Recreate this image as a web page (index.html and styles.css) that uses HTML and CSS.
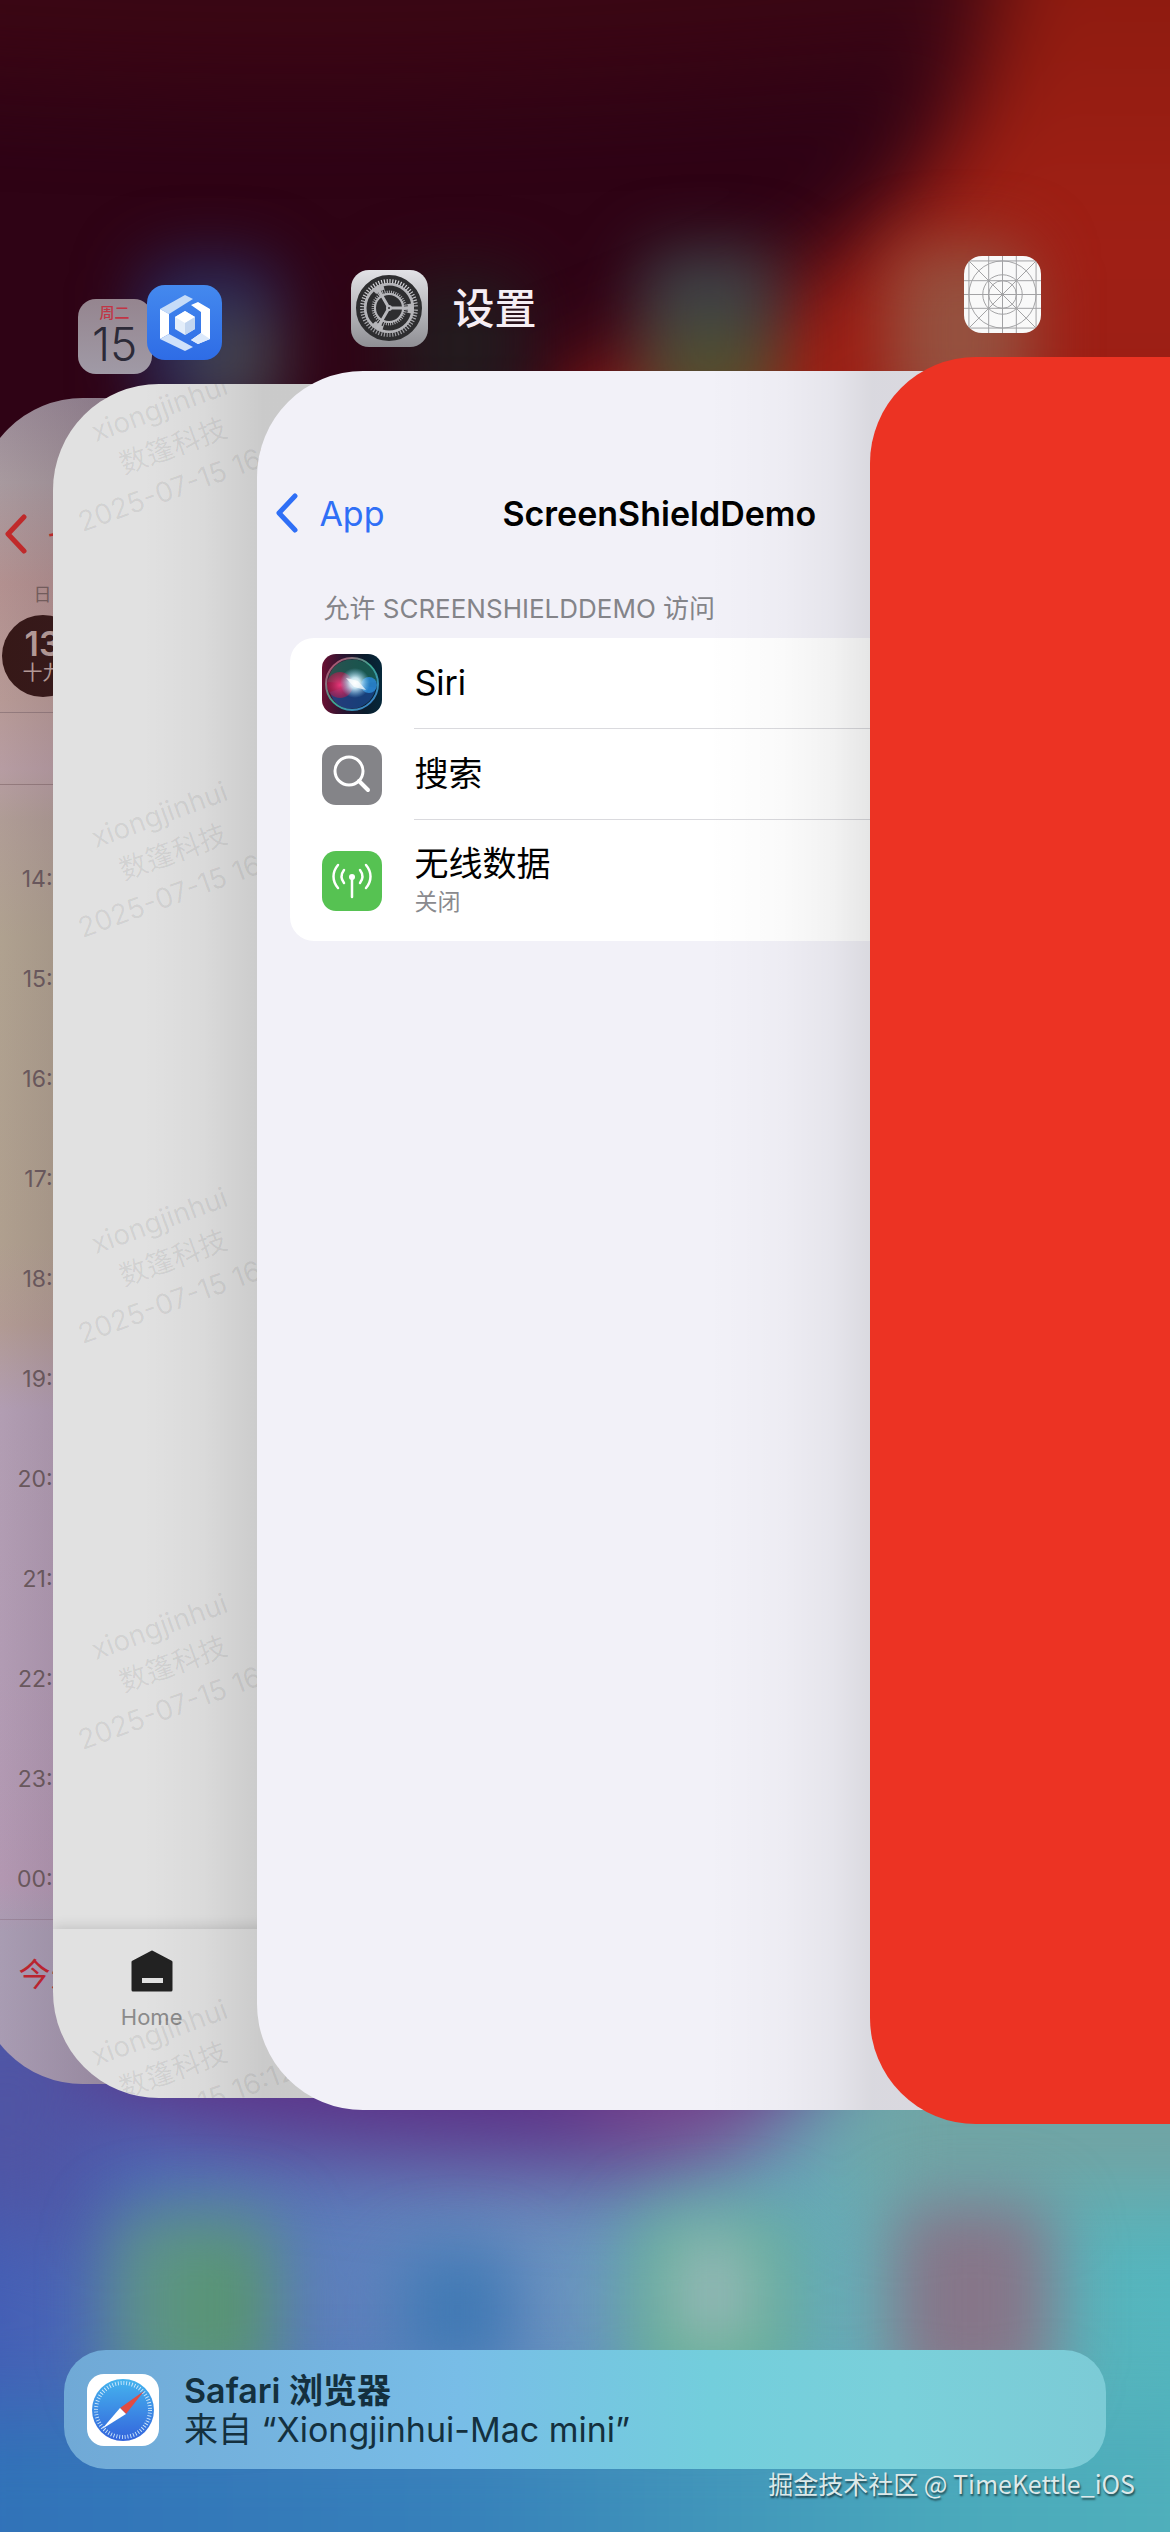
FILE: index.html
```
<!DOCTYPE html>
<html lang="zh-CN">

<head>
    <meta charset="UTF-8" />
    <meta name="viewport" content="width=device-width, initial-scale=1" />
    <title>App Switcher</title>
    <link rel="stylesheet" href="styles.css">
</head>

<body>
    <!-- blurred home screen -->
    <svg class="wallpaper" viewBox="0 0 1170 2532" preserveAspectRatio="none" aria-hidden="true">
        <defs>
            <linearGradient id="wp-red" x1="0" y1="0" x2="0" y2="1">
                <stop offset="0" stop-color="#84180d" />
                <stop offset="0.5" stop-color="#a02015" />
                <stop offset="1" stop-color="#981c14" />
            </linearGradient>
            <linearGradient id="wp-mid" x1="0" y1="0" x2="1" y2="0">
                <stop offset="0" stop-color="#4560b6" />
                <stop offset="0.45" stop-color="#6a90c0" />
                <stop offset="0.75" stop-color="#66b0b8" />
                <stop offset="1" stop-color="#54b6be" />
            </linearGradient>
            <linearGradient id="wp-low" x1="0" y1="0" x2="1" y2="0">
                <stop offset="0" stop-color="#3070b8" />
                <stop offset="0.4" stop-color="#3680ba" />
                <stop offset="0.75" stop-color="#4aa9bb" />
                <stop offset="1" stop-color="#52b2bb" />
            </linearGradient>
        </defs>
        <rect width="1170" height="1300" fill="#2f0315" />
        <rect y="1300" width="1170" height="1232" fill="url(#wp-mid)" />
        <g class="blur-lg">
            <path d="M-100-100H1300V40C900 60 500 120-100 80Z" fill="#3a0614" />
            <path d="M1010-150L990 20C970 110 920 190 850 250C780 310 680 335 540 400V600H1350V-150Z" fill="url(#wp-red)" />
            <path d="M-100 2000H100V2260C60 2240-20 2200-100 2220Z" fill="#5055a4" />
            <path d="M90 2000H850C800 2150 700 2190 540 2170C380 2160 200 2150 90 2090Z" fill="#5c3388" />
            <path d="M560 2070H820C790 2140 720 2170 620 2140Z" fill="#7c468c" />
            <path d="M850 2060H1300V2200H850Z" fill="#72a3a3" />
            <path d="M-100 2410H1300V2650H-100Z" fill="url(#wp-low)" />
        </g>
        <g class="blur-md">
            <rect x="140" y="260" width="140" height="160" rx="30" fill="#28285a" />
            <rect x="190" y="310" width="90" height="100" rx="30" fill="#46464f" />
            <rect x="390" y="270" width="140" height="150" rx="30" fill="#231a1e" />
            <rect x="640" y="250" width="140" height="170" rx="30" fill="#3c4248" />
            <rect x="650" y="330" width="130" height="90" rx="30" fill="#54502e" />
            <rect x="890" y="245" width="140" height="175" rx="30" fill="#95513f" />
            <rect x="110" y="2210" width="170" height="190" rx="40" fill="#5d9487" />
            <rect x="190" y="2240" width="70" height="140" rx="30" fill="#589470" />
            <rect x="400" y="2250" width="115" height="120" rx="30" fill="#4079b4" />
            <rect x="630" y="2210" width="165" height="190" rx="40" fill="#66b094" />
            <rect x="675" y="2235" width="75" height="110" rx="30" fill="#9ab8bc" />
            <rect x="890" y="2200" width="165" height="200" rx="40" fill="#867689" />
        </g>
    </svg>

    <main class="switcher">
        <!-- Calendar -->
        <section class="window window-calendar">
            <header class="window-header">
                <div class="icon icon-calendar">
                    <span class="icon-weekday">周二</span>
                    <span class="icon-day">15</span>
                </div>
            </header>
            <div class="card calendar">
                <div class="calendar-nav">
                    <svg class="chevron" viewBox="0 0 24 40"><path d="M20 3L4 20l16 17" /></svg>
                    <a href="#">七月</a>
                </div>
                <div class="calendar-day">
                    <span class="day-name">日</span>
                    <div class="day-circle">
                        <span class="day-num">13</span>
                        <span class="day-lunar">十九</span>
                    </div>
                </div>
                <div class="calendar-band"></div>
                <ol class="hours">
                    <li>14:00</li>
                    <li>15:00</li>
                    <li>16:00</li>
                    <li>17:00</li>
                    <li>18:00</li>
                    <li>19:00</li>
                    <li>20:00</li>
                    <li>21:00</li>
                    <li>22:00</li>
                    <li>23:00</li>
                    <li>00:00</li>
                </ol>
                <div class="calendar-toolbar"><a href="#">今天</a></div>
            </div>
        </section>

        <!-- Company app -->
        <section class="window window-company">
            <header class="window-header">
                <svg class="icon icon-company" viewBox="0 0 75 75">
                    <defs>
                        <linearGradient id="hex-bg" x1="0" y1="0" x2="0" y2="1">
                            <stop offset="0" stop-color="#4489ee" />
                            <stop offset="1" stop-color="#2e6ce6" />
                        </linearGradient>
                    </defs>
                    <rect width="75" height="75" fill="url(#hex-bg)" />
                    <path d="M38 10l8 4-24 15-9-5z" fill="#c6dcf8" />
                    <path d="M13 24l9 5v20l-9 5z" fill="#fff" />
                    <path d="M13 54l9-5 24 13-8 4z" fill="#cfe1fa" />
                    <path d="M44 20l7-3 12 7v30l-12 5-7-4 10-7V27z" fill="#fff" />
                    <path d="M54 48l9 6-12 5-7-4z" fill="#dce9fb" />
                    <path d="M38 26l10 6v12l-10 6-10-6V32z" fill="#e4eefa" />
                    <path d="M38 26l10 6-10 6-10-6z" fill="#fff" />
                    <path d="M38 38l10-6v12l-10 6z" fill="#c3d6f0" />
                </svg>
            </header>
            <div class="card company">
                <div class="watermarks" aria-hidden="true">
                    <p class="watermark">xiongjinhui<br>数篷科技<br>2025-07-15 16:12</p>
                    <p class="watermark">xiongjinhui<br>数篷科技<br>2025-07-15 16:12</p>
                    <p class="watermark">xiongjinhui<br>数篷科技<br>2025-07-15 16:12</p>
                    <p class="watermark">xiongjinhui<br>数篷科技<br>2025-07-15 16:12</p>
                    <p class="watermark">xiongjinhui<br>数篷科技<br>2025-07-15 16:12</p>
                </div>
                <nav class="tabbar">
                    <button type="button" class="tab">
                        <svg viewBox="0 0 42 42">
                            <path d="M2 12L21 2l19 10v28H2z" fill="#222" stroke="#222" stroke-width="3" stroke-linejoin="round" />
                            <rect x="11" y="28" width="21" height="5" fill="#e2e2e2" />
                        </svg>
                        Home
                    </button>
                </nav>
            </div>
        </section>

        <!-- Settings -->
        <section class="window window-settings">
            <header class="window-header">
                <svg class="icon" viewBox="0 0 77 77">
                    <defs>
                        <linearGradient id="gear-bg" x1="0" y1="0" x2="0" y2="1">
                            <stop offset="0" stop-color="#e2e2e6" />
                            <stop offset="1" stop-color="#8f8f94" />
                        </linearGradient>
                    </defs>
                    <rect width="77" height="77" fill="url(#gear-bg)" />
                    <circle cx="38" cy="38" r="31" fill="none" stroke="#2e2e30" stroke-width="4" />
                    <circle cx="38" cy="38" r="28" fill="none" stroke="#2e2e30" stroke-width="6" stroke-dasharray="1.7 1.2" />
                    <circle cx="38" cy="38" r="25" fill="#b4b4b8" />
                    <circle cx="38" cy="38" r="20" fill="none" stroke="#2e2e30" stroke-width="5" stroke-dasharray="32 9.9" stroke-dashoffset="-5" />
                    <circle cx="38" cy="38" r="17" fill="none" stroke="#2e2e30" stroke-width="4" stroke-dasharray="1.3 1" />
                    <circle cx="38" cy="38" r="14" fill="#2e2e30" stroke="#b4b4b8" stroke-width="2" />
                    <g stroke="#b8b8bc" stroke-width="3">
                        <path d="M38 38H62M38 38L26 17.200M38 38L26 58.800" />
                    </g>
                    <circle cx="38" cy="38" r="3" fill="#b8b8bc" />
                    <circle cx="38" cy="38" r="1" fill="#2e2e30" />
                </svg>
                <span class="window-name">设置</span>
            </header>
            <div class="card settings">
                <div class="settings-nav">
                    <a href="#" class="back">
                        <svg class="chevron" viewBox="0 0 24 40"><path d="M20 3L4 20l16 17" /></svg>
                        App
                    </a>
                    <h1>ScreenShieldDemo</h1>
                </div>
                <h2 class="group-title">允许 SCREENSHIELDDEMO 访问</h2>
                <ul class="group">
                    <li class="row">
                        <svg class="row-icon" viewBox="0 0 60 60">
                            <defs>
                                <linearGradient id="siri-bg" x1="0" y1="0" x2="1" y2="0">
                                    <stop offset="0" stop-color="#6a1032" />
                                    <stop offset="0.35" stop-color="#2a1430" />
                                    <stop offset="0.7" stop-color="#0b1c2c" />
                                    <stop offset="1" stop-color="#06283a" />
                                </linearGradient>
                                <radialGradient id="siri-glow">
                                    <stop offset="0" stop-color="#fff" />
                                    <stop offset="0.35" stop-color="#d8f4ff" stop-opacity="0.9" />
                                    <stop offset="1" stop-color="#7ac8f0" stop-opacity="0" />
                                </radialGradient>
                                <linearGradient id="siri-ring" x1="0" y1="0" x2="1" y2="1">
                                    <stop offset="0" stop-color="#d03a68" />
                                    <stop offset="0.5" stop-color="#3aa890" />
                                    <stop offset="1" stop-color="#3a78d8" />
                                </linearGradient>
                                <radialGradient id="siri-pink">
                                    <stop offset="0" stop-color="#e8387a" />
                                    <stop offset="1" stop-color="#b01c4c" stop-opacity="0.6" />
                                </radialGradient>
                            </defs>
                            <rect width="60" height="60" fill="url(#siri-bg)" />
                            <path d="M6 28C8-2 52-2 55 28L33 30Z" fill="#1f6e5c" opacity="0.7" />
                            <path d="M8 38C14 62 48 60 54 34L33 30Z" fill="#1c4f9a" opacity="0.7" />
                            <circle cx="18" cy="31" r="13" fill="url(#siri-pink)" />
                            <circle cx="47" cy="31" r="8" fill="#2a86d0" opacity="0.9" />
                            <circle cx="30" cy="30" r="26" fill="none" stroke="url(#siri-ring)" stroke-width="2" />
                            <circle cx="33" cy="29" r="15" fill="url(#siri-glow)" />
                            <path d="M24 24L36 27l8 9-12-3z" fill="#fff" opacity="0.7" />
                        </svg>
                        <div class="row-body"><a href="#">Siri</a></div>
                    </li>
                    <li class="row">
                        <svg class="row-icon" viewBox="0 0 60 60">
                            <rect width="60" height="60" fill="#848488" />
                            <g fill="none" stroke="#fff" stroke-width="3" stroke-linecap="round">
                                <circle cx="27" cy="26" r="14" />
                                <path d="M37 36l9 9" stroke-width="4" />
                            </g>
                        </svg>
                        <div class="row-body"><a href="#">搜索</a></div>
                    </li>
                    <li class="row row-tall">
                        <svg class="row-icon" viewBox="0 0 60 60">
                            <rect width="60" height="60" fill="#56c252" />
                            <circle cx="30" cy="26" r="3" fill="#fff" />
                            <g fill="none" stroke="#fff" stroke-width="2.500" stroke-linecap="round">
                                <path d="M30 28v18" />
                                <path d="M22 32c-3-4-3-9 0-13M38 32c3-4 3-9 0-13" />
                                <path d="M16 37c-6-7-6-16 0-23M44 37c6-7 6-16 0-23" />
                            </g>
                        </svg>
                        <div class="row-body">
                            <a href="#">无线数据</a>
                            <small>关闭</small>
                        </div>
                    </li>
                </ul>
            </div>
        </section>

        <!-- ScreenShieldDemo -->
        <section class="window window-demo">
            <header class="window-header">
                <svg class="icon" viewBox="0 0 78 78">
                    <rect width="78" height="78" fill="#f9f9f9" />
                    <g fill="none" stroke="#a2a2a4" stroke-width="1">
                        <path d="M5 0V78M25 0V78M39 0V78M53 0V78M73 0V78" />
                        <path d="M0 5H78M0 25H78M0 39H78M0 53H78M0 73H78" />
                        <path d="M5 5L73 73M73 5L5 73" />
                        <circle cx="39" cy="39" r="34" />
                        <circle cx="39" cy="39" r="20" />
                        <circle cx="39" cy="39" r="14" />
                    </g>
                </svg>
            </header>
            <div class="card demo"></div>
        </section>
    </main>

    <footer class="dock">
        <button type="button" class="handoff">
            <svg class="handoff-icon" viewBox="0 0 72 72">
                <defs>
                    <linearGradient id="safari-bg" x1="0" y1="0" x2="0" y2="1">
                        <stop offset="0" stop-color="#45b4ee" />
                        <stop offset="1" stop-color="#3464dc" />
                    </linearGradient>
                </defs>
                <rect width="72" height="72" fill="#fff" />
                <circle cx="36" cy="36" r="31" fill="url(#safari-bg)" />
                <circle cx="36" cy="36" r="27" fill="none" stroke="#cfe8fb" stroke-width="4" stroke-dasharray="0.900 1.927" />
                <path d="M57 17L39 40l-6-6z" fill="#e24b41" />
                <path d="M15 55L33 34l6 6z" fill="#fff" />
            </svg>
            <span class="handoff-text">
                <strong>Safari 浏览器</strong>
                <span>来自 “Xiongjinhui-Mac mini”</span>
            </span>
        </button>
        <p class="credit">掘金技术社区 @ TimeKettle_iOS</p>
    </footer>
</body>

</html>
```
FILE: styles.css
```
* {
    box-sizing: border-box;
}

body {
    position: relative;
    margin: 0;
    min-height: 100vh;
    display: flex;
    flex-direction: column;
    overflow: hidden;
    background: #2f0315;
    font-family: Inter, "Noto Sans CJK SC", sans-serif;
    color: #000;
}

a {
    color: inherit;
    text-decoration: none;
}

h1, h2, p, ul, ol {
    margin: 0;
    padding: 0;
    font-weight: 400;
    list-style: none;
}

button {
    border: none;
    background: none;
    padding: 0;
    font: inherit;
    text-align: left;
    cursor: pointer;
}

.wallpaper {
    position: absolute;
    top: 0;
    left: 0;
    width: 100%;
    height: 100%;
}

.blur-lg {
    filter: blur(44px);
}

.blur-md {
    filter: blur(32px);
}

/* stacked windows */
.switcher {
    position: relative;
    flex: 1;
    overflow: hidden;
}

.window {
    position: absolute;
}

.window-calendar {
    top: 299px;
    left: -2%;
    width: 66.6%;
}

.window-company {
    top: 285px;
    left: 4.5%;
    width: 67.7%;
}

.window-settings {
    top: 270px;
    left: 22%;
    width: 68.7%;
}

.window-demo {
    top: 256px;
    left: 74.4%;
    width: 69.8%;
}

.window-header {
    display: flex;
    align-items: center;
    gap: 24px;
    margin-bottom: 24px;
    padding-left: 94px;
}

.icon {
    display: block;
    flex: none;
    width: 77px;
    height: 77px;
    border-radius: 18px;
}

.window-name {
    color: #f6eef4;
    font-size: 42px;
    font-weight: 500;
    line-height: 60px;
}

.card {
    position: relative;
    overflow: hidden;
    display: flex;
    flex-direction: column;
    aspect-ratio: 1170 / 2532;
    border-radius: 106px;
}

.chevron {
    flex: none;
    width: 24px;
    height: 40px;
    fill: none;
    stroke: currentColor;
    stroke-width: 5px;
    stroke-linecap: round;
    stroke-linejoin: round;
}

/* calendar */
.window-calendar .window-header {
    padding-left: 101px;
}

.icon-calendar {
    display: flex;
    flex-direction: column;
    align-items: center;
    width: 74px;
    height: 75px;
    padding-top: 4px;
    background: linear-gradient(#95858f, #a09aa6);
}

.icon-weekday {
    color: #c13545;
    font-size: 15px;
    font-weight: 500;
    line-height: 20px;
}

.icon-day {
    color: #2c2a38;
    font-size: 46px;
    font-weight: 300;
    line-height: 42px;
}

.calendar {
    background: linear-gradient(#9b8b98, #a89a9f 5%, #b39190 11%, #b79a96 18%, #b79da3 22%, #b09d96 25%, #b0a290 32%, #b0a08f 50%, #b29b94 55%, #b29eb3 60%, #b29cb4 75%, #b398b2 88%, #a99db3 91%, #a99cb3);
}

.calendar::after,
.company::after,
.settings::after {
    content: "";
    position: absolute;
    top: 0;
    bottom: 0;
    pointer-events: none;
}

.calendar::after {
    left: 20px;
    width: 160px;
    background: linear-gradient(90deg, transparent, rgba(60, 40, 60, 0.25));
}

.calendar-nav {
    display: flex;
    align-items: center;
    gap: 20px;
    height: 60px;
    margin-top: 106px;
    padding-left: 27px;
    color: #c42a2a;
    font-size: 34px;
}

.calendar-day {
    display: flex;
    flex-direction: column;
    align-items: flex-start;
    height: 149px;
    padding: 18px 25px 0;
    border-bottom: 1px solid #957c7e;
}

.day-name {
    width: 82px;
    text-align: center;
    color: #76605e;
    font-size: 18px;
    line-height: 26px;
}

.day-circle {
    display: flex;
    flex-direction: column;
    align-items: center;
    width: 82px;
    height: 82px;
    margin-top: 7px;
    padding-top: 12px;
    border-radius: 50%;
    background: #361817;
    color: #b99f9b;
}

.day-num {
    font-size: 34px;
    font-weight: 600;
    line-height: 34px;
}

.day-lunar {
    font-size: 20px;
    line-height: 24px;
}

.calendar-band {
    height: 72px;
    border-bottom: 1px solid #957c7e;
}

.hours {
    width: 105px;
    margin-top: 44px;
    text-align: right;
    color: #6b5a5e;
    font-size: 23px;
    line-height: 100px;
}

.calendar-toolbar {
    flex: 1;
    margin-top: -10px;
    padding: 33px 42px;
    border-top: 1px solid #9c879c;
    color: #c2242e;
    font-size: 32px;
    line-height: 44px;
}

/* company app */
.icon-company {
    width: 75px;
    height: 75px;
}

.company {
    background: #e1e1e1;
}

.company::after {
    left: 90px;
    width: 240px;
    background: linear-gradient(90deg, transparent, rgba(0, 0, 0, 0.03) 25%, rgba(0, 0, 0, 0.1) 50%, rgba(0, 0, 0, 0.1));
}

.watermarks {
    position: absolute;
    top: 2px;
    left: 0;
    display: flex;
    flex-direction: column;
    gap: 286px;
}

.watermark {
    width: 240px;
    transform: rotate(-20deg);
    color: rgba(0, 0, 0, 0.07);
    font-size: 28px;
    line-height: 40px;
    text-align: center;
    white-space: nowrap;
}

.tabbar {
    display: flex;
    align-items: flex-start;
    height: 169px;
    margin-top: auto;
    box-shadow: 0 -2px 12px rgba(0, 0, 0, 0.14);
}

.tab {
    display: flex;
    flex-direction: column;
    align-items: center;
    gap: 12px;
    width: 25%;
    padding-top: 21px;
    color: #8b8b8b;
    font-size: 22px;
    line-height: 26px;
}

.tab svg {
    width: 42px;
    height: 42px;
}

/* settings */
.settings {
    background: #f2f1f8;
}

.settings::after {
    left: 450px;
    width: 300px;
    background: linear-gradient(90deg, transparent, rgba(0, 0, 0, 0.02) 25%, rgba(0, 0, 0, 0.05) 42%, rgba(0, 0, 0, 0.1) 55%, rgba(0, 0, 0, 0.1));
}

.settings-nav {
    display: grid;
    grid-template-columns: 1fr auto 1fr;
    align-items: center;
    height: 60px;
    margin-top: 112px;
    padding: 0 18px;
}

.back {
    display: flex;
    align-items: center;
    gap: 20px;
    color: #2f6ff6;
    font-size: 34px;
}

.settings-nav h1 {
    font-size: 34px;
    font-weight: 600;
}

.group-title {
    margin: 51px 66px 14px;
    color: #848489;
    font-size: 26px;
    line-height: 30px;
}

.group {
    margin: 0 33px;
    border-radius: 24px;
    background: #fff;
}

.row {
    display: flex;
    align-items: center;
    gap: 32px;
    height: 91px;
    padding-left: 32px;
}

.row-tall {
    height: 121px;
}

.row-icon {
    flex: none;
    width: 60px;
    height: 60px;
    border-radius: 14px;
}

.row-body {
    flex: 1;
    align-self: stretch;
    display: flex;
    flex-direction: column;
    justify-content: center;
    border-bottom: 1px solid #dadade;
    font-size: 34px;
    line-height: 42px;
}

.row:last-child .row-body {
    border-bottom: none;
}

.row-body small {
    color: #8a8a8e;
    font-size: 23px;
    line-height: 34px;
}

/* demo app */
.demo {
    background: #ec3323;
}

/* handoff banner */
.dock {
    position: relative;
    padding: 0 64px 35px;
}

.handoff {
    display: flex;
    align-items: center;
    gap: 25px;
    width: 100%;
    height: 119px;
    padding-left: 23px;
    border-radius: 42px;
    background: linear-gradient(90deg, #70a9d6, #78bde7 38%, #73cedc 62%, #7ad0da 80%, #7ccbd6);
    color: #14303e;
}

.handoff-icon {
    flex: none;
    width: 72px;
    height: 72px;
    border-radius: 17px;
}

.handoff-text {
    display: flex;
    flex-direction: column;
    font-size: 34px;
    line-height: 39px;
}

.handoff-text strong {
    font-weight: 600;
}

.credit {
    margin-right: -29px;
    color: #dde9ea;
    font-family: "Noto Sans CJK SC", sans-serif;
    font-size: 25px;
    line-height: 28px;
    text-align: right;
    text-shadow: 1px 2px 2px rgba(0, 0, 0, 0.6);
}
```
